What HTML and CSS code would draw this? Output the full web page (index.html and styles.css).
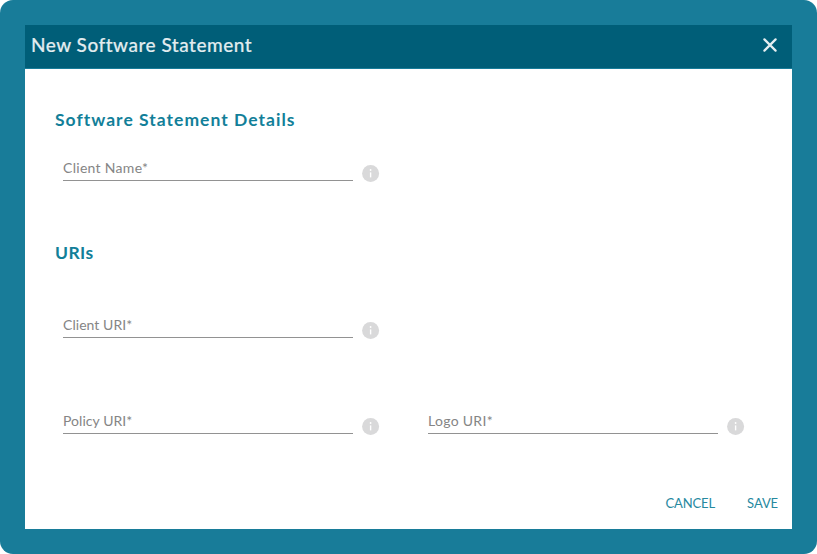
FILE: index.html
```html
<!DOCTYPE html>
<html lang="en">
<head>
<meta charset="utf-8">
<title>New Software Statement</title>
<link rel="stylesheet" href="styles.css">
</head>
<body>
<svg class="symbols" aria-hidden="true">
  <symbol id="info" viewBox="0 0 18 18">
    <circle cx="8.6" cy="9.4" r="8.5" fill="#d9d9da"/>
    <circle cx="8.6" cy="6" r="0.9" fill="#fff"/>
    <path d="M8.6 8.4v5" stroke="#fff" stroke-width="1.4"/>
  </symbol>
</svg>
<div class="frame">
  <main class="dialog">
    <header class="dialog-header">
      <h1>New Software Statement</h1>
      <button class="close" aria-label="Close"><svg viewBox="0 0 14 14"><path d="M1.4 1.4 12.6 12.6M12.6 1.4 1.4 12.6"/></svg></button>
    </header>
    <form class="content">
      <h2 class="details">Software Statement Details</h2>
      <div class="row name-row">
        <div class="field"><label class="name">Client Name*</label><svg class="info"><use href="#info"/></svg></div>
      </div>
      <h2 class="uris">URIs</h2>
      <div class="row client-row">
        <div class="field"><label class="client">Client URI*</label><svg class="info"><use href="#info"/></svg></div>
      </div>
      <div class="row links-row">
        <div class="field"><label class="policy">Policy URI*</label><svg class="info"><use href="#info"/></svg></div>
        <div class="field"><label class="logo">Logo URI*</label><svg class="info"><use href="#info"/></svg></div>
      </div>
    </form>
    <footer class="actions">
      <button class="cancel">CANCEL</button>
      <button class="save">SAVE</button>
    </footer>
  </main>
</div>
</body>
</html>
```
FILE: styles.css
```css
* { box-sizing: border-box; }
body { margin: 0; background: #fff; font-family: Lato, "Liberation Sans", sans-serif; }
button { padding: 0; border: 0; background: none; font: inherit; }
.symbols { display: none; }
.frame { width: 817px; height: 554px; padding: 25px; border-radius: 13px; background: #187c99; }
.dialog { display: flex; flex-direction: column; height: 504px; background: #fff; }
.dialog-header { display: flex; justify-content: space-between; align-items: center; height: 44px; padding: 0 15px 0 6px; background: #005e78; border-bottom: 1px solid #187c99; color: #e1ecef; }
h1 { margin: 0; font-size: 19px; line-height: 38px; height: 42px; font-weight: 500; letter-spacing: 0.5px; -webkit-text-stroke: 0.15px #e1ecef; }
.close { display: flex; margin-bottom: 3px; }
.close svg { width: 14px; height: 14px; fill: none; stroke: #e6eff2; stroke-width: 2.2; stroke-linecap: round; }
.content { flex: 1; padding: 39px 30px 0; }
h2 { margin: 0; height: 24px; font-size: 17.5px; line-height: 24px; font-weight: 700; letter-spacing: 1.02px; color: #127f99; }
.row { display: flex; gap: 48px; padding-left: 8px; }
.field { display: flex; align-items: flex-start; gap: 9px; }
label { width: 290px; height: 24px; border-bottom: 1px solid #929292; font-size: 14px; line-height: 22px; letter-spacing: 0.3px; color: #858585; }
.client, .policy { letter-spacing: 0.05px; }
.info { width: 18px; height: 18px; margin-top: 7px; }
.name-row { margin-top: 25px; }
.uris { margin-top: 59px; letter-spacing: 0.4px; }
.client-row { margin-top: 49px; }
.links-row { margin-top: 71px; }
.actions { display: flex; justify-content: flex-end; gap: 32px; height: 36px; padding-right: 14px; }
.actions button { height: 20px; font-size: 13px; line-height: 21px; letter-spacing: -0.1px; color: #27899f; }
```
